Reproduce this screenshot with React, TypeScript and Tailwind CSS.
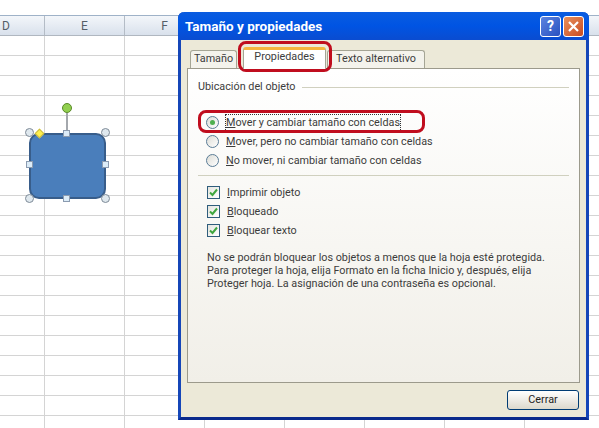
import React from 'react'

const font = { fontFamily: 'Roboto, "Noto Sans", sans-serif' }
const columns = ['D', 'E', 'F', '', '', '', '', '']
const columnWidths = ['w-[45px]', 'w-[80px]', 'w-[80px]', 'w-[80px]', 'w-[80px]', 'w-[80px]', 'w-[80px]', 'w-[80px]']

function Sheet() {
  const rows = Array.from({ length: 20 })
  return (
    <div className="w-[599px] overflow-hidden bg-white">
      <div className="h-[15px] bg-white" />
      <div className="flex h-[21px] w-[640px] border-t border-b border-t-[#9fb2c8] border-b-[#b0b7c0] bg-gradient-to-b from-[#f3f6fa] to-[#d9e1ec]">
        {columns.map((c, i) => (
          <div
            key={i}
            className={`${columnWidths[i]} flex items-center border-r border-[#b4bcc6] text-[12px] text-[#555e68] ${i === 0 ? 'justify-start pl-[2px]' : 'justify-center'}`}
          >
            {c}
          </div>
        ))}
      </div>
      {rows.map((_, r) => (
        <div key={r} className="flex h-[20px] w-[640px] border-b border-[#d4d4d4]">
          {columns.map((_, i) => (
            <div key={i} className={`${columnWidths[i]} border-r border-[#d4d4d4]`} />
          ))}
        </div>
      ))}
    </div>
  )
}

function Handle({ className }: { className: string }) {
  return <div className={`absolute h-[7px] w-[7px] border border-[#8b9bb0] bg-[#dcecf8] ${className}`} />
}

function Corner({ className }: { className: string }) {
  return <div className={`absolute h-[9px] w-[9px] rounded-full border border-[#7f8b98] bg-[#dfe8ee] ${className}`} />
}

function Shape() {
  return (
    <div className="absolute left-[29px] top-[133px] h-[66px] w-[77px]">
      <div className="h-full w-full rounded-[10px] border-2 border-[#385d8a] bg-[#4a7ebb]" />
      <div className="absolute left-[37px] top-[-20px] h-[20px] w-[2px] bg-[#a4a8ad]" />
      <div className="absolute left-[33px] top-[-30px] h-[10px] w-[10px] rounded-full border border-[#5b8a2a] bg-[#92d050]" />
      <div className="absolute left-[7px] top-[-3px] h-[7px] w-[7px] rotate-45 border border-[#c9b945] bg-[#fff04d]" />
      <Corner className="left-[-4px] top-[-5px]" />
      <Corner className="right-[-4px] top-[-5px]" />
      <Corner className="left-[-4px] bottom-[-4px]" />
      <Corner className="right-[-4px] bottom-[-4px]" />
      <Handle className="left-[34px] top-[-3px]" />
      <Handle className="left-[34px] bottom-[-3px]" />
      <Handle className="left-[-3px] top-[28px]" />
      <Handle className="right-[-3px] top-[28px]" />
    </div>
  )
}

function Radio({ checked, mark, after }: { checked?: boolean; mark: string; after: string }) {
  return (
    <div className="flex h-[19px] items-center">
      <div className="flex h-[13px] w-[13px] items-center justify-center rounded-full border border-[#5a7c96] bg-gradient-to-br from-[#dcdcd6] to-white">
        {checked && <div className="h-[5px] w-[5px] rounded-full bg-[#4fb04f]" />}
      </div>
      <span className={`ml-[7px] ${checked ? 'outline-1 outline-dotted outline-[#333]' : ''}`}>
        <span className="underline">{mark}</span>
        {after}
      </span>
    </div>
  )
}

function Check({ mark, after }: { mark: string; after: string }) {
  return (
    <div className="flex h-[19px] items-center">
      <div className="flex h-[13px] w-[13px] items-center justify-center border border-[#2f5d7c] bg-gradient-to-br from-[#e4e4de] to-white">
        <svg width="9" height="9" viewBox="0 0 9 9">
          <path d="M1 4.5 L3.5 7 L8 1.5" fill="none" stroke="#3fa63f" strokeWidth="2" />
        </svg>
      </div>
      <span className="ml-[7px]">
        <span className="underline">{mark}</span>
        {after}
      </span>
    </div>
  )
}

function Dialog() {
  return (
    <div
      className="absolute left-[178px] top-[12px] flex h-[408px] w-[411px] flex-col rounded-t-[6px] border-x-[3px] border-b-[3px] border-x-[#1546b8] border-b-[#0a2a8c] bg-[#ece9d8] text-[10.8px] text-[#3c3c3c]"
      style={font}
    >
      <div className="mx-[-3px] flex h-[28px] shrink-0 items-center justify-between rounded-t-[6px] bg-gradient-to-b from-[#0a5ce0] via-[#0054e3] to-[#0a4cd0] pl-[7px] pr-[5px]">
        <span className="text-[13.5px] font-bold text-white">Tamaño y propiedades</span>
        <div className="flex gap-[2px]">
          <div className="flex h-[21px] w-[21px] items-center justify-center rounded-[3px] border border-white bg-gradient-to-br from-[#5c84e0] to-[#2a50c0] text-[14px] font-bold text-white">
            ?
          </div>
          <div className="flex h-[21px] w-[21px] items-center justify-center rounded-[3px] border border-white bg-gradient-to-br from-[#e8905c] to-[#c84a20]">
            <svg width="13" height="13" viewBox="0 0 13 13">
              <path d="M2 2 L11 11 M11 2 L2 11" stroke="#fff" strokeWidth="2.2" />
            </svg>
          </div>
        </div>
      </div>

      <div className="flex h-[28px] shrink-0 items-end pl-[9px]">
        <div className="flex h-[18px] w-[47px] items-center justify-center rounded-t-[3px] border border-b-0 border-[#a5a595] bg-[#f4f3ec]">
          Tamaño
        </div>
        <div className="relative z-10 ml-[6px] mb-[-1px] flex h-[22px] w-[83px] items-center justify-center rounded-t-[3px] border-x border-[#a5a595] border-t-[3px] border-t-[#f5b53f] bg-white pb-[4px]">
          Propiedades
        </div>
        <div className="ml-[1px] flex h-[18px] w-[98px] items-center justify-center rounded-t-[3px] border border-b-0 border-[#a5a595] bg-[#f4f3ec]">
          Texto alternativo
        </div>
      </div>

      <div className="mx-[6px] h-[315px] shrink-0 border border-[#9c9a8c] bg-gradient-to-b from-white to-[#f1efe8] px-[10px] pt-[10px]">
        <div className="flex items-center">
          <span>Ubicación del objeto</span>
          <div className="ml-[6px] h-px flex-1 bg-[#d0d0bf]" />
        </div>
        <div className="ml-[8px] mt-[18px]">
          <Radio checked mark="M" after="over y cambiar tamaño con celdas" />
          <Radio mark="M" after="over, pero no cambiar tamaño con celdas" />
          <Radio mark="N" after="o mover, ni cambiar tamaño con celdas" />
        </div>
        <div className="mt-[5px] h-px bg-[#d0d0bf]" />
        <div className="ml-[9px] mt-[7px]">
          <Check mark="I" after="mprimir objeto" />
          <Check mark="B" after="loqueado" />
          <Check mark="B" after="loquear texto" />
        </div>
        <p className="ml-[9px] mt-[11px] w-[350px] leading-[13px]">
          No se podrán bloquear los objetos a menos que la hoja esté protegida. Para proteger la hoja, elija Formato en la ficha Inicio y, después, elija Proteger hoja. La asignación de una contraseña es opcional.
        </p>
      </div>

      <div className="mr-[7px] mt-[7px] flex justify-end">
        <div className="flex h-[20px] w-[72px] items-center justify-center rounded-[3px] border border-[#003c74] bg-gradient-to-b from-white to-[#dcd8cc] text-[#222]">
          Cerrar
        </div>
      </div>

      <div className="pointer-events-none absolute left-[57px] top-[29px] h-[31px] w-[94px] rounded-[8px] border-[3px] border-[#c00d1e]" />
      <div className="pointer-events-none absolute left-[17px] top-[98px] h-[23px] w-[227px] rounded-[8px] border-[3px] border-[#c00d1e]" />
    </div>
  )
}

export default function App() {
  return (
    <div className="relative h-[428px] w-[599px] overflow-hidden bg-white" style={font}>
      <Sheet />
      <Shape />
      <Dialog />
    </div>
  )
}
